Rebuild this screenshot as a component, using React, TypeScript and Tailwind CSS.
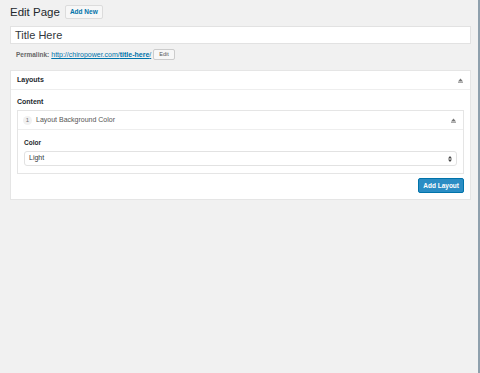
import React from "react";

function UpArrow({ className }: { className?: string }) {
    return (
        <svg width="5" height="5" viewBox="0 0 5 5" className={className}>
            <path d="M2.5 0.5 L5 3.5 L0 3.5 Z" fill="#777" />
            <rect x="0" y="4" width="5" height="1" fill="#aaa" />
        </svg>
    );
}

export default function App() {
    return (
        <div
            className="flex h-[373px] w-[480px] bg-[#f1f1f1] text-[#23282d]"
            style={{ fontFamily: "'Helvetica Neue', 'Liberation Sans', Arial, sans-serif" }}
        >
            <div className="flex-1 pl-[10px] pr-[7px] pt-[5px]">
                <div className="flex h-[14px] items-center gap-[5px]">
                    <h1 className="text-[11.5px] leading-[14px] text-[#23282d]">Edit Page</h1>
                    <span className="rounded-[2px] border border-[#dcdcdc] bg-[#f7f7f7] px-[4px] text-[6.5px] font-semibold leading-[12px] text-[#0073aa]">
                        Add New
                    </span>
                </div>

                <div className="mt-[7px] flex h-[18px] items-center border border-[#e2e2e2] bg-white px-[4px] text-[11px] text-[#32373c]">
                    Title Here
                </div>

                <div className="mt-[5px] flex items-center pl-[6px] text-[6.5px] leading-[11px]">
                    <span className="font-semibold text-[#666]">Permalink:</span>
                    <span className="ml-[2px] text-[7px] text-[#0073aa] underline">
                        http://chiropower.com/<b className="font-semibold">title-here</b>/
                    </span>
                    <span className="ml-[2px] rounded-[2px] border border-[#ccc] bg-[#f7f7f7] px-[5px] text-[5.5px] leading-[9px] text-[#555]">
                        Edit
                    </span>
                </div>

                <div className="mt-[10px] border border-[#e5e5e5] bg-white">
                    <div className="flex h-[19px] items-center justify-between border-b border-[#eee] pl-[6px] pr-[7px]">
                        <span className="text-[7px] font-semibold">Layouts</span>
                        <UpArrow />
                    </div>
                    <div className="px-[6px] pb-[6px] pt-[7px]">
                        <div className="text-[7px] font-semibold leading-[10px]">Content</div>
                        <div className="mt-[3px] border border-[#e5e5e5]">
                            <div className="flex h-[19px] items-center justify-between border-b border-[#eee] pl-[5px] pr-[7px]">
                                <div className="flex items-center gap-[4px]">
                                    <span className="flex h-[9px] w-[9px] items-center justify-center rounded-full bg-[#f1f1f1] text-[6px] text-[#777]">
                                        1
                                    </span>
                                    <span className="text-[7px] text-[#555]">Layout Background Color</span>
                                </div>
                                <UpArrow />
                            </div>
                            <div className="px-[6px] pb-[7px] pt-[8px]">
                                <div className="text-[6.5px] font-semibold leading-[9px]">Color</div>
                                <div className="mt-[4px] flex h-[15px] items-center justify-between rounded-[3px] border border-[#e2e2e2] px-[4px]">
                                    <span className="text-[7px] text-[#32373c]">Light</span>
                                    <svg width="4" height="6" viewBox="0 0 4 6">
                                        <path d="M2 0 L4 2.4 L0 2.4 Z M2 6 L4 3.6 L0 3.6 Z" fill="#444" />
                                    </svg>
                                </div>
                            </div>
                        </div>
                        <div className="mt-[4px] flex justify-end">
                            <span className="rounded-[2px] border border-[#0073aa] bg-[#2b8dc4] px-[4px] text-[6.5px] font-semibold leading-[13px] text-white">
                                Add Layout
                            </span>
                        </div>
                    </div>
                </div>
            </div>
            <div className="w-[2px] bg-[#8fa0ad]" />
        </div>
    );
}
